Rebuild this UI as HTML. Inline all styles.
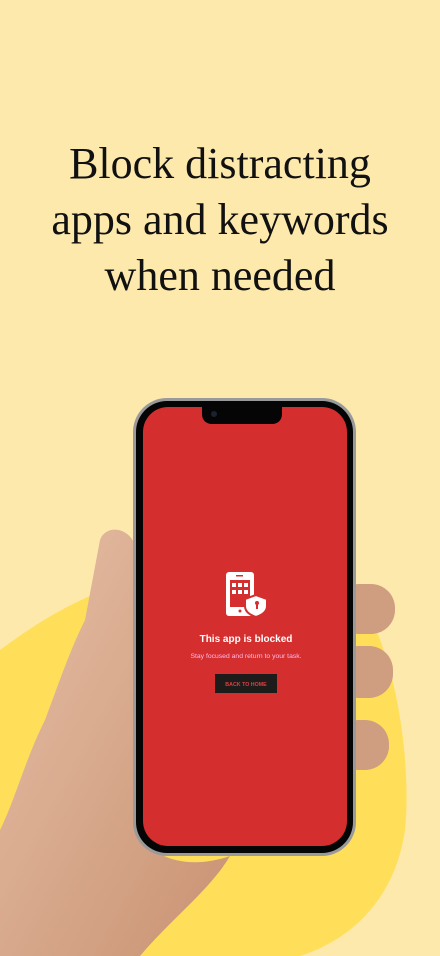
<!DOCTYPE html>
<html><head><style>
html,body{margin:0;padding:0;width:440px;height:956px;overflow:hidden;background:#fee9ad;}
.t{position:absolute;left:0;width:440px;top:136px;text-align:center;font-family:"Liberation Serif",serif;font-size:44px;line-height:56px;color:#111;}
</style></head><body>
<svg width="440" height="956" style="position:absolute;left:0;top:0">
<defs>
<linearGradient id="sk" x1="0" y1="0" x2="1" y2="1">
<stop offset="0" stop-color="#e6bfa6"/><stop offset="1" stop-color="#c99272"/>
</linearGradient>
</defs>
<path d="M0 650 C40 620 90 590 135 582 L360 600 C395 650 412 760 405 830 C395 900 350 940 300 956 L0 956 Z" fill="#ffdf5a"/>
<rect x="335" y="584" width="60" height="50" rx="24" fill="#cf9d80"/>
<rect x="335" y="646" width="58" height="52" rx="24" fill="#cf9d80"/>
<rect x="335" y="720" width="54" height="50" rx="24" fill="#cf9d80"/>
<path d="M100 540 C105 525 128 526 135 545 L140 660 L140 830 C150 860 190 870 230 856 C210 890 170 920 140 956 L0 956 L0 830 C15 800 25 760 45 720 C60 680 70 650 85 620 Z" fill="url(#sk)"/>
<rect x="133" y="398" width="223" height="458" rx="34" fill="#9a9a9a"/>
<rect x="136" y="401" width="217" height="452" rx="31" fill="#050505"/>
<rect x="143" y="407" width="204" height="439" rx="25" fill="#d42e2e"/>
<path d="M202 406 L282 406 L282 414 C282 420 278 424 272 424 L212 424 C206 424 202 420 202 414 Z" fill="#050505"/>
<circle cx="214" cy="414" r="3" fill="#1a2230"/>
<rect x="226" y="572" width="28" height="44" rx="3" fill="#fff"/>
<rect x="230" y="580" width="20" height="27" fill="#d42e2e"/>
<g fill="#fff"><rect x="232" y="583" width="4" height="4"/><rect x="238" y="583" width="4" height="4"/><rect x="244" y="583" width="4" height="4"/><rect x="232" y="590" width="4" height="4"/><rect x="238" y="590" width="4" height="4"/><rect x="244" y="590" width="4" height="4"/></g>
<rect x="236" y="575" width="7" height="1.5" fill="#d42e2e"/>
<circle cx="240" cy="611" r="1.5" fill="#d42e2e"/>
<path d="M256 595 L267 599 L267 606 C267 612 262 615 256 617 C250 615 245 612 245 606 L245 599 Z" fill="#fff" stroke="#d42e2e" stroke-width="2"/>
<circle cx="257" cy="603" r="2" fill="#d42e2e"/><rect x="256" y="603" width="2" height="6" fill="#d42e2e"/>
<text x="246" y="642" text-anchor="middle" font-family="Liberation Sans,sans-serif" font-weight="bold" font-size="10" fill="#fff">This app is blocked</text>
<text x="246" y="658" text-anchor="middle" font-family="Liberation Sans,sans-serif" font-size="6.8" fill="#fbe">Stay focused and return to your task.</text>
<rect x="215" y="674" width="62" height="19" fill="#1e1b1b"/>
<text x="246" y="686" text-anchor="middle" font-family="Liberation Sans,sans-serif" font-weight="bold" font-size="5.3" fill="#e04040">BACK TO HOME</text>
</svg>
<div class="t">Block distracting<br>apps and keywords<br>when needed</div>
</body></html>
